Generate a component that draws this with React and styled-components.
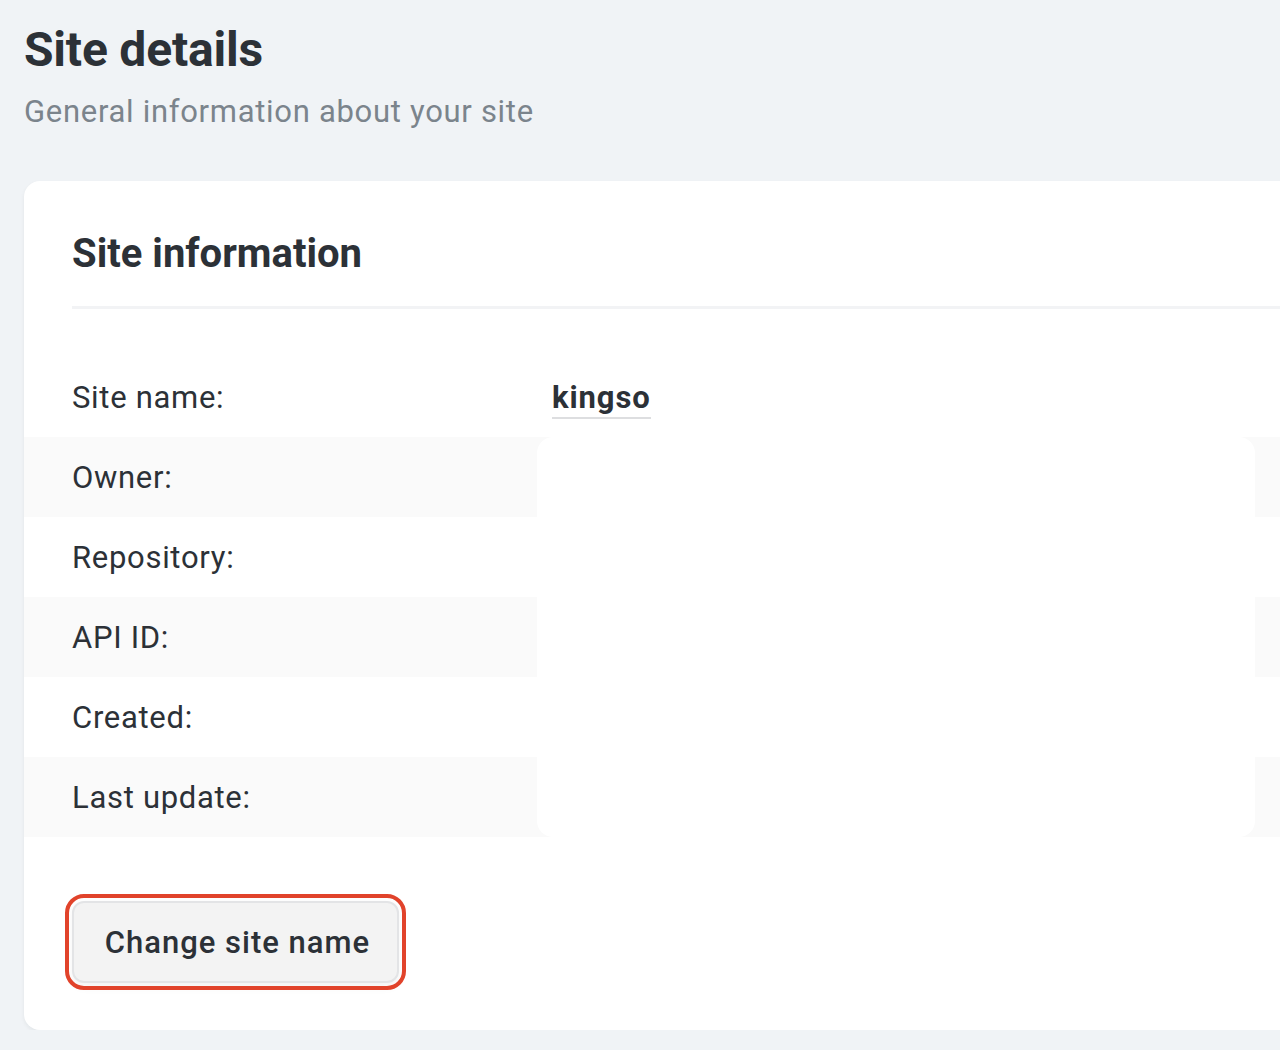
import React from 'react';
import styled, { createGlobalStyle } from 'styled-components';

const rows = [
  { label: 'Site name:', value: 'kingso' },
  { label: 'Owner:' },
  { label: 'Repository:' },
  { label: 'API ID:' },
  { label: 'Created:' },
  { label: 'Last update:' },
];

const App = () => {
  return (
    <>
      <GlobalStyle />
      <Page>
        <Intro>
          <Title>Site details</Title>
          <Subtitle>General information about your site</Subtitle>
        </Intro>

        <Card>
          <CardHeader>
            <CardTitle>Site information</CardTitle>
          </CardHeader>

          <Table>
            {rows.map((row, i) => (
              <Row key={row.label} $striped={i % 2 === 1}>
                <Label>{row.label}</Label>
                <Value>{row.value && <SiteName>{row.value}</SiteName>}</Value>
              </Row>
            ))}
            <Redacted />
          </Table>

          <Actions>
            <Boton type="button">Change site name</Boton>
          </Actions>
        </Card>
      </Page>
    </>
  );
};

const GlobalStyle = createGlobalStyle`
  html, body {
    margin: 0;
    padding: 0;
    background: #f0f3f6;
    overflow: hidden;
  }

  body {
    font-family: Roboto, "Liberation Sans", Arial, sans-serif;
    color: #2c3137;
  }
`;

const Page = styled.div`
  padding: 20px 0 0 24px;
  width: 1400px;
`;

const Intro = styled.header`
  margin-bottom: 43px;
`;

const Title = styled.h1`
  margin: 0;
  font-size: 48px;
  line-height: 60px;
  font-weight: 700;
  color: #2c3137;
  letter-spacing: -0.2px;
`;

const Subtitle = styled.p`
  margin: 6px 0 0 0;
  font-size: 31px;
  line-height: 52px;
  font-weight: 400;
  color: #7b848c;
  letter-spacing: 0.7px;
`;

const Card = styled.section`
  width: 1320px;
  background: #fff;
  border-radius: 16px;
  box-shadow: 0 2px 4px rgba(20, 30, 40, 0.06);
  padding-bottom: 47px;
`;

const CardHeader = styled.div`
  margin: 0 0 48px 48px;
  padding: 48px 0 27px;
  border-bottom: 3px solid #f2f3f5;
`;

const CardTitle = styled.h2`
  margin: 0;
  font-size: 40px;
  line-height: 50px;
  font-weight: 700;
  color: #2c3137;
`;

const Table = styled.div`
  position: relative;
`;

const Row = styled.div`
  display: flex;
  align-items: center;
  height: 80px;
  padding-left: 48px;
  background: ${(props) => (props.$striped ? '#fafafa' : '#fff')};
`;

const Label = styled.div`
  width: 480px;
  font-size: 31px;
  color: #2c3137;
  letter-spacing: 0.7px;
`;

const Value = styled.div`
  flex: 1;
  font-size: 31px;
`;

const SiteName = styled.span`
  font-weight: 700;
  color: #2c3137;
  letter-spacing: 0.9px;
  border-bottom: 2px solid #dddee0;
  padding-bottom: 1px;
`;

const Redacted = styled.div`
  position: absolute;
  left: 513px;
  top: 80px;
  width: 718px;
  height: 400px;
  background: #fff;
  border-radius: 16px;
`;

const Actions = styled.div`
  padding: 64px 0 0 48px;
`;

const Boton = styled.button`
  width: 327px;
  height: 82px;
  padding: 0 0 0 4px;
  background: #f3f3f3;
  border: 2px solid #e3e4e6;
  border-radius: 12px;
  font-family: Roboto, "Liberation Sans", Arial, sans-serif;
  font-size: 31px;
  font-weight: 500;
  letter-spacing: 1px;
  color: #2c3137;
  cursor: pointer;
  outline: 4px solid #e1432b;
  outline-offset: 3px;
  box-shadow: 0 4px 10px rgba(0, 0, 0, 0.05);
`;

export default App;
